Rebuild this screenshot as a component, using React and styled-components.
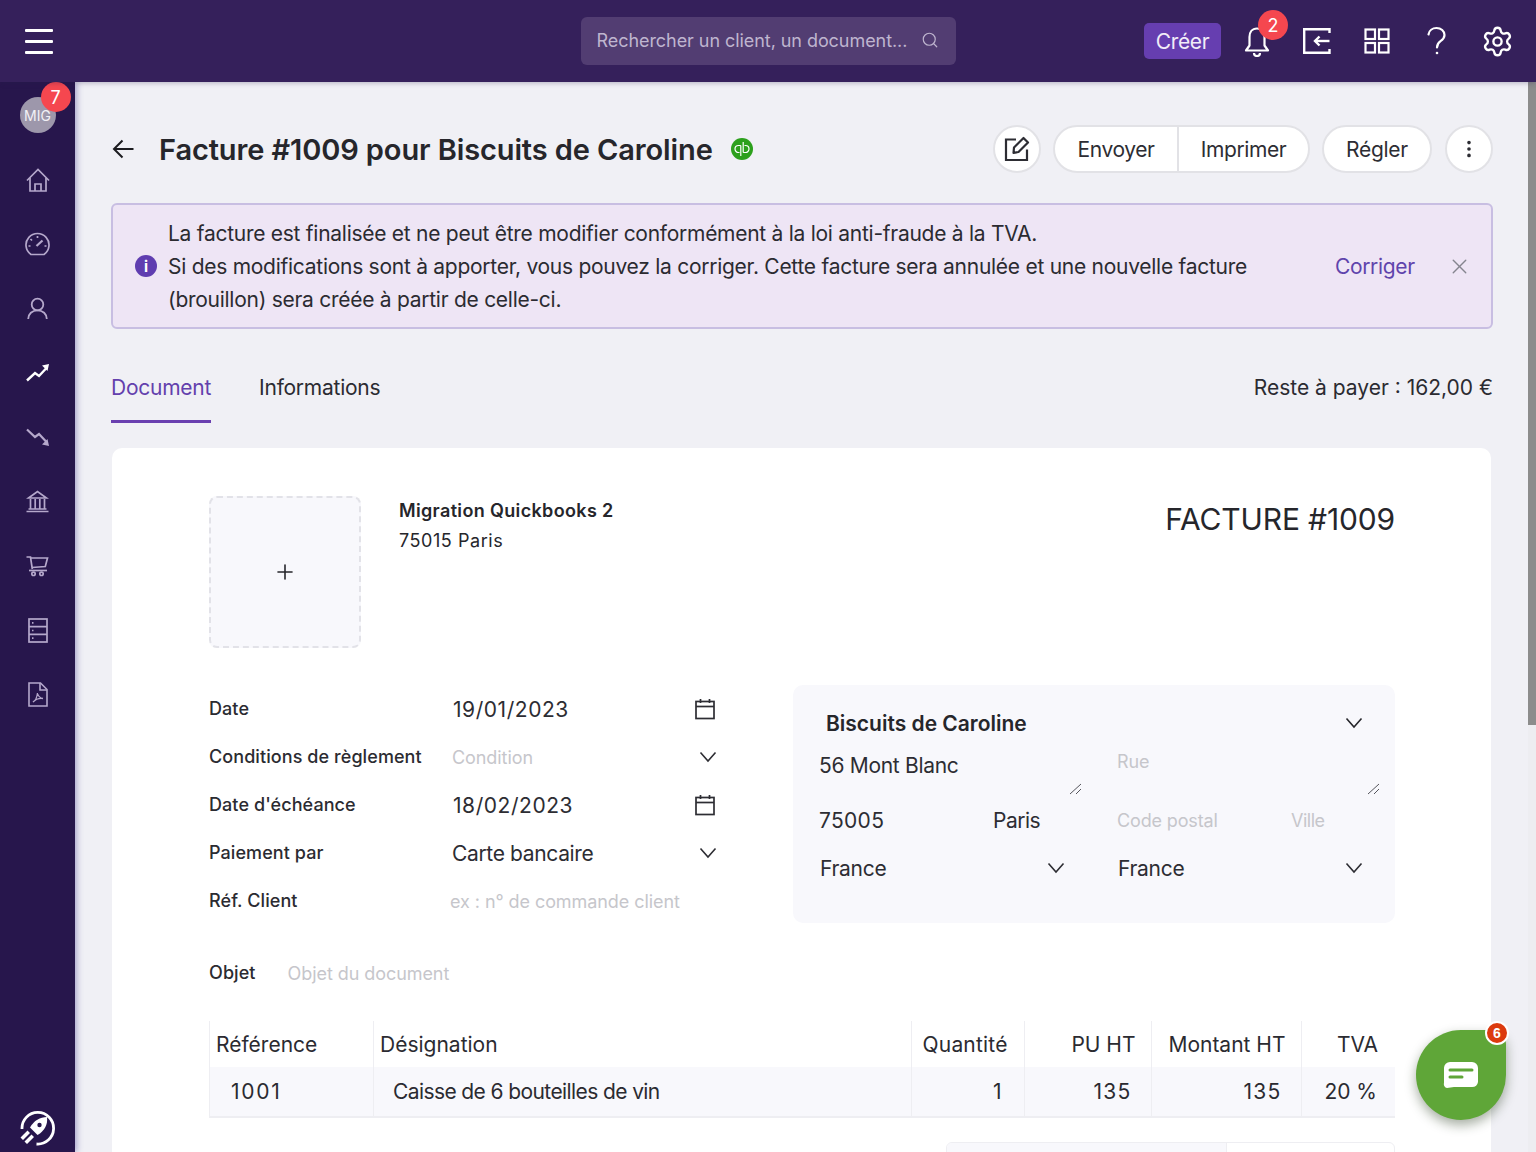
import React from "react";
import styled, {createGlobalStyle} from "styled-components";
import {EllipsisVertical, Plus, Search, Settings, X} from "lucide-react";

const GlobalStyle = createGlobalStyle`
  html, body {
    margin: 0;
    padding: 0;
    height: 1152px;
    overflow: hidden;
    background: #f0f0f5;
  }
  * { box-sizing: border-box; }
  body {
    font-family: Inter, "Liberation Sans", sans-serif;
    color: #26262b;
  }
`;

const Page = styled.div`
  width: 1536px;
  height: 1152px;
  display: flex;
  flex-direction: column;
  position: relative;
  overflow: hidden;
`;

/* top bar */
const TopBar = styled.header`
  height: 82px;
  flex: none;
  background: #35205b;
  display: grid;
  grid-template-columns: 1fr 375px 1fr;
  align-items: center;
  position: relative;
  z-index: 3;
  box-shadow: 0 1px 5px rgba(40, 30, 80, 0.3);
`;

const Burger = styled.button`
  width: 28px;
  height: 25px;
  margin-left: 25px;
  padding: 0;
  border: 0;
  background: none;
  display: flex;
  flex-direction: column;
  justify-content: space-between;
  span {
    display: block;
    height: 3px;
    border-radius: 1px;
    background: #fff;
  }
`;

const SearchBox = styled.div`
  height: 48px;
  border-radius: 6px;
  background: #523d72;
  display: flex;
  align-items: center;
  justify-content: space-between;
  padding: 0 17px 2px 16px;
  color: #bfb5cf;
  font-size: 18px;
  letter-spacing: -0.06px;
`;

const TopActions = styled.div`
  display: flex;
  align-items: center;
  justify-content: flex-end;
  padding-right: 9px;
`;

const CreateButton = styled.button`
  width: 77px;
  height: 36px;
  border: 0;
  border-radius: 5px;
  background: #663eb0;
  color: #f1ecf8;
  font: 400 21px Inter, sans-serif;
  letter-spacing: -0.4px;
  margin-right: 6px;
`;

const TopIcon = styled.div`
  width: 60px;
  height: 40px;
  display: flex;
  align-items: center;
  justify-content: center;
  color: #fff;
  position: relative;
`;

const Badge = styled.span`
  position: absolute;
  width: 30px;
  height: 30px;
  border-radius: 50%;
  background: #f5474f;
  color: #fff;
  font-size: 18px;
  display: flex;
  align-items: center;
  justify-content: center;
  top: ${(p) => p.$top}px;
  left: ${(p) => p.$left}px;
`;

/* body layout */
const Body = styled.div`
  flex: 1;
  display: flex;
  min-height: 0;
`;

const SideBar = styled.nav`
  width: 75px;
  flex: none;
  background: #27164c;
  display: flex;
  flex-direction: column;
  align-items: center;
  padding-top: 15px;
  position: relative;
  z-index: 2;
  box-shadow: 2px 0 6px rgba(85, 70, 160, 0.45);
`;

const Avatar = styled.div`
  width: 36px;
  height: 36px;
  border-radius: 50%;
  background: #9d97ab;
  color: #f2f0f5;
  font-size: 14px;
  display: flex;
  align-items: center;
  justify-content: center;
  position: relative;
  margin-bottom: 14.5px;
`;

const NavIcon = styled.div`
  height: 64.4px;
  flex: none;
  width: 100%;
  display: flex;
  align-items: center;
  justify-content: center;
  color: ${(p) => (p.$active ? "#ffffff" : "#b5a8cb")};
`;

const RocketSlot = styled.div`
  margin-top: auto;
  height: 42px;
  display: flex;
  align-items: flex-start;
  padding-right: 1px;
`;

const Main = styled.main`
  flex: 1;
  min-width: 0;
  padding: 43px 35px 0 36px;
  background: #f0f0f5;
  overflow: hidden;
`;

const ScrollTrack = styled.div`
  width: 8px;
  flex: none;
  background: #ededf1;
`;

const ScrollThumb = styled.div`
  height: 643px;
  background: #8c8c8c;
`;

/* title row */
const TitleRow = styled.div`
  height: 48px;
  display: flex;
  align-items: center;
`;

const BackLink = styled.div`
  width: 48px;
  padding-left: 1px;
  display: flex;
  color: #1c1c20;
`;

const Title = styled.h1`
  margin: 0;
  font-size: 29px;
  font-weight: 600;
  letter-spacing: -0.11px;
  color: #26262b;
  white-space: nowrap;
`;

const StatusDot = styled.svg`
  margin-left: 18px;
  flex: none;
`;

const TitleActions = styled.div`
  margin-left: auto;
  display: flex;
  gap: 12px;
  align-items: center;
`;

const RoundButton = styled.button`
  height: 48px;
  width: ${(p) => (p.$w ? p.$w + "px" : "48px")};
  margin-left: ${(p) => p.$ml || 0}px;
  padding: 0;
  border-radius: 24px;
  border: 2px solid #e2e2e6;
  background: #fff;
  color: #2d2d33;
  font: 400 21px Inter, sans-serif;
  letter-spacing: -0.25px;
  display: flex;
  align-items: center;
  justify-content: center;
`;

const ButtonGroup = styled.div`
  height: 48px;
  display: flex;
  border-radius: 24px;
  border: 2px solid #e2e2e6;
  background: #fff;
  overflow: hidden;
`;

const GroupItem = styled.div`
  width: ${(p) => p.$w}px;
  display: flex;
  align-items: center;
  justify-content: center;
  font-size: 21px;
  letter-spacing: -0.4px;
  color: #2d2d33;
  & + & {
    border-left: 2px solid #e2e2e6;
  }
`;

/* alert */
const Alert = styled.div`
  margin-top: 30px;
  height: 126px;
  border: 2px solid #c8bee2;
  border-radius: 6px;
  background: #eee5f5;
  display: flex;
  align-items: center;
  padding: 0 19px 0 22px;
`;

const InfoDot = styled.div`
  width: 22px;
  height: 22px;
  flex: none;
  border-radius: 50%;
  background: #5f3db0;
  color: #fff;
  font-size: 15px;
  font-weight: 700;
  display: flex;
  align-items: center;
  justify-content: center;
  margin-right: 11px;
`;

const AlertText = styled.div`
  font-size: 21px;
  line-height: 33px;
  letter-spacing: -0.27px;
  padding-top: 1px;
  width: 1167px;
  flex: none;
  color: #2b2b31;
`;

const AlertLink = styled.span`
  font-size: 21px;
  letter-spacing: -0.35px;
  color: #5f44ac;
`;

const AlertClose = styled.span`
  margin-left: auto;
  display: flex;
  color: #85858f;
`;

/* tabs */
const TabsRow = styled.div`
  margin-top: 43px;
  display: flex;
  align-items: flex-start;
  gap: 48px;
`;

const Tab = styled.div`
  font-size: 21px;
  letter-spacing: -0.25px;
  line-height: 32px;
  padding-bottom: 16px;
  height: 51px;
  color: ${(p) => (p.$active ? "#6340ad" : "#2b2b31")};
  border-bottom: 3px solid ${(p) => (p.$active ? "#6a40b0" : "transparent")};
`;

const Balance = styled.div`
  margin-left: auto;
  font-size: 21px;
  line-height: 32px;
  color: #2b2b31;
`;

/* document card */
const Card = styled.section`
  margin: 25px 2px 0 1px;
  padding: 48px 96px 0 97px;
  background: #fff;
  border-radius: 10px;
`;

const CardHead = styled.div`
  display: flex;
  align-items: flex-start;
`;

const LogoDrop = styled.div`
  width: 152px;
  height: 152px;
  flex: none;
  border: 2px dashed #e2e2e8;
  border-radius: 8px;
  background: #f8f8fc;
  display: flex;
  align-items: center;
  justify-content: center;
  color: #26262b;
`;

const Company = styled.div`
  margin-left: 38px;
  font-size: 18px;
  line-height: 29.5px;
  letter-spacing: 0.55px;
  strong {
    display: block;
    font-weight: 600;
    letter-spacing: 0.35px;
  }
`;

const DocNumber = styled.div`
  margin-left: auto;
  font-size: 30px;
  letter-spacing: -0.15px;
  line-height: 46px;
  color: #26262b;
`;

const FormGrid = styled.div`
  margin-top: 37px;
  display: grid;
  grid-template-columns: 508px 602px;
  justify-content: space-between;
  align-items: start;
`;

const FieldRow = styled.div`
  height: 48px;
  display: grid;
  grid-template-columns: 243px 1fr 24px;
  align-items: center;
`;

const FieldLabel = styled.div`
  font-size: 18px;
  font-weight: 500;
  letter-spacing: 0.08px;
  padding-bottom: 2px;
  color: #2b2b31;
`;

const FieldValue = styled.div`
  font-size: 21px;
  letter-spacing: ${(p) => (p.$digits ? "0.55px" : "-0.35px")};
  margin-left: ${(p) => (p.$digits ? "1px" : "0")};
  color: #2d2d33;
`;

const Placeholder = styled.div`
  font-size: 18px;
  letter-spacing: -0.07px;
  color: #c6c6cb;
  margin-left: ${(p) => p.$ml || 0}px;
`;

const IconSlot = styled.div`
  display: flex;
  justify-content: center;
  color: #2d2d33;
  margin-left: ${(p) => p.$ml || 0}px;
`;

/* client block */
const ClientPanel = styled.div`
  height: 238px;
  padding: 20px 12px 0 26px;
  border-radius: 10px;
  background: #f8f8fc;
`;

const ClientHead = styled.div`
  height: 36px;
  display: flex;
  align-items: center;
  justify-content: space-between;
  padding: 0 20px 0 7px;
  font-size: 21px;
  font-weight: 600;
  color: #26262b;
`;

const AddressColumns = styled.div`
  display: grid;
  grid-template-columns: 266px 266px;
  column-gap: 32px;
`;

const AddressBlock = styled.div`
  height: 56px;
  display: flex;
  justify-content: space-between;
`;

const AddressText = styled.div`
  padding-top: ${(p) => p.$pt}px;
  font-size: ${(p) => p.$size}px;
  color: ${(p) => p.$color};
  letter-spacing: ${(p) => p.$spacing || 0};
  line-height: 30px;
`;

const Grip = styled.svg`
  align-self: flex-end;
  margin: 0 3px 2px 0;
`;

const CityRow = styled.div`
  height: 47px;
  display: grid;
  grid-template-columns: 174px 1fr;
  align-items: center;
  font-size: ${(p) => p.$size}px;
  letter-spacing: ${(p) => p.$spacing || 0};
  color: ${(p) => p.$color};
  span + span {
    letter-spacing: -0.5px;
  }
`;

const CountryRow = styled.div`
  height: 48px;
  display: flex;
  align-items: center;
  justify-content: space-between;
  padding: 0 20px 0 1px;
  font-size: 21px;
  letter-spacing: -0.3px;
  color: #2d2d33;
`;

const ObjectRow = styled.div`
  margin-top: 24px;
  height: 48px;
  display: flex;
  align-items: center;
  gap: 32px;
`;

/* table of lines */
const LinesTable = styled.table`
  margin-top: 24px;
  width: 100%;
  border-collapse: collapse;
  table-layout: fixed;
  font-size: 21px;
  color: #2b2b31;
  border-bottom: 2px solid #eeeef2;
`;

const HeadCell = styled.th`
  height: 46px;
  width: ${(p) => (p.$w ? p.$w + "px" : "auto")};
  padding: 0 ${(p) => p.$pr || 0}px 0 ${(p) => p.$pl || 0}px;
  font-weight: 400;
  letter-spacing: ${(p) => p.$spacing || 0};
  text-align: ${(p) => p.$align || "left"};
  border-left: 1.5px solid #eeeef2;
`;

const BodyCell = styled.td`
  height: 50px;
  padding: 0 ${(p) => p.$pr || 0}px 0 ${(p) => p.$pl || 0}px;
  background: #f8f8fc;
  text-align: ${(p) => p.$align || "left"};
  border-left: 1.5px solid #eeeef2;
  letter-spacing: ${(p) => p.$spacing || 0};
`;

const Totals = styled.div`
  margin: 24px 0 0 auto;
  width: 449px;
  height: 60px;
  display: grid;
  grid-template-columns: 280px 1fr;
  border: 1.5px solid #eeeef2;
  border-radius: 6px 6px 0 0;
  overflow: hidden;
  div:first-child {
    background: #f8f8fc;
    border-right: 1.5px solid #eeeef2;
  }
`;

/* floating chat */
const ChatBubble = styled.button`
  position: absolute;
  left: 1416px;
  top: 1030px;
  width: 90px;
  height: 90px;
  padding: 0;
  border: 0;
  border-radius: 50% 16px 50% 50% / 50% 14px 50% 50%;
  background: #5fa638;
  box-shadow: 0 5px 12px rgba(30, 50, 20, 0.4);
  display: flex;
  align-items: center;
  justify-content: center;
  z-index: 4;
`;

const ChatBadge = styled.span`
  position: absolute;
  top: -9px;
  right: -3px;
  width: 24px;
  height: 24px;
  border-radius: 50%;
  border: 2.5px solid #fff;
  background: #dc3a0e;
  color: #fff;
  font-size: 14px;
  font-weight: 600;
  display: flex;
  align-items: center;
  justify-content: center;
`;

const BackArrow = () => (
  <svg width="22" height="20" viewBox="0 0 22 20" fill="none" stroke="currentColor" strokeWidth="2">
    <path d="M21.500 10H2M10.500 1.500 2 10l8.500 8.500" />
  </svg>
);

const BellIcon = () => (
  <svg width="26" height="31" viewBox="0 0 26 31" fill="none" stroke="currentColor" strokeWidth="2.200" strokeLinejoin="round">
    <path d="M13 2.500c-5 0-7.500 3.800-7.500 8.500v8.500L2 24.500h22l-3.500-5V11c0-4.700-2.500-8.500-7.500-8.500z" />
    <path d="M10 27a3 3 0 0 0 6 0" />
  </svg>
);

const TransferIcon = () => (
  <svg width="30" height="28" viewBox="0 0 30 28" fill="none" stroke="currentColor" strokeWidth="2.400">
    <path d="M27.500 6V2.200H2.200v23.600h25.300V22" />
    <path d="M27.500 14H13" />
    <path d="M17.500 9.500 13 14l4.500 4.500" />
  </svg>
);

const TilesIcon = () => (
  <svg width="26" height="26" viewBox="0 0 26 26" fill="none" stroke="currentColor" strokeWidth="2.200">
    <rect x="1.500" y="1.500" width="9.500" height="9.500" />
    <rect x="15" y="1.500" width="9.500" height="9.500" />
    <rect x="1.500" y="15" width="9.500" height="9.500" />
    <rect x="15" y="15" width="9.500" height="9.500" />
  </svg>
);

const QuestionIcon = () => (
  <svg width="22" height="30" viewBox="0 0 22 30" fill="none" stroke="currentColor" strokeWidth="2.200">
    <path d="M2.500 8.500C3 4.500 6.500 2 10.500 2c4.500 0 8 3 8 7 0 3-1.700 4.600-4 6.200-2.200 1.600-3.500 3-3.500 6.300" strokeLinecap="round" />
    <circle cx="11" cy="27" r="1.300" fill="currentColor" stroke="none" />
  </svg>
);

const EditIcon = () => (
  <svg width="26" height="26" viewBox="0 0 26 26" fill="none" stroke="#2d2d33" strokeWidth="2.200">
    <path d="M12 3.500H2v20.500h21V13.500" />
    <path d="M10 11.500 19.500 2l4.500 4.500-9.500 9.500-5 .8z" strokeLinejoin="round" />
  </svg>
);

const CalendarIcon = () => (
  <svg width="20" height="22" viewBox="0 0 20 22" fill="none" stroke="currentColor" strokeWidth="1.700">
    <rect x="1" y="3.500" width="18" height="17" />
    <path d="M1 8.500h18" />
    <path d="M5.500 1v4M14.500 1v4" />
  </svg>
);

const ChevronIcon = () => (
  <svg width="18" height="12" viewBox="0 0 18 12" fill="none" stroke="currentColor" strokeWidth="1.600">
    <path d="M1.500 1.500 9 10l7.500-8.500" />
  </svg>
);

const HomeIcon = () => (
  <svg width="24" height="24" viewBox="0 0 24 24" fill="none" stroke="currentColor" strokeWidth="1.700">
    <path d="M1 12.500 12 1.500l11 11" />
    <path d="M4 10v13h16V10" />
    <path d="M9 23v-7h6v7" />
  </svg>
);

const GaugeIcon = () => (
  <svg width="25" height="24" viewBox="0 0 25 24" fill="none" stroke="currentColor" strokeWidth="1.700">
    <path d="M6 22.500h13a11.500 11.500 0 1 0-13 0z" />
    <path d="M11.500 14 17.500 8.500" strokeWidth="2.200" />
    <path d="M12.500 4v2M5.500 7l1.500 1.500M3.500 14h2M19.500 14h2" />
  </svg>
);

const UserIcon = () => (
  <svg width="21" height="23" viewBox="0 0 21 23" fill="none" stroke="currentColor" strokeWidth="1.800">
    <circle cx="10.500" cy="7.500" r="5.800" />
    <path d="M1.200 22c0-5 4-8.700 9.300-8.700s9.300 3.700 9.300 8.700" />
  </svg>
);

const TrendUpIcon = () => (
  <svg width="24" height="19" viewBox="0 0 24 19" fill="none" stroke="currentColor" strokeWidth="2.400">
    <path d="M1 17.500 9 10l4 3 7.500-8" />
    <path d="M16 2.500 23 1l-1.500 7z" fill="currentColor" stroke="none" />
  </svg>
);

const TrendDownIcon = () => (
  <svg width="24" height="19" viewBox="0 0 24 19" fill="none" stroke="currentColor" strokeWidth="2.200">
    <path d="M1 1.500 9 9l4-3 7.500 8" />
    <path d="M16 16.500 23 18l-1.500-7z" fill="currentColor" stroke="none" />
  </svg>
);

const BankIcon = () => (
  <svg width="23" height="23" viewBox="0 0 23 23" fill="none" stroke="currentColor" strokeWidth="1.700">
    <path d="M2.500 8 11.500 1.500 20.500 8z" />
    <path d="M4.500 9v10M9.200 9v10M13.800 9v10M18.500 9v10" />
    <path d="M0.500 21.500h22M2.500 19h18" />
  </svg>
);

const CartIcon = () => (
  <svg width="23" height="21" viewBox="0 0 23 21" fill="none" stroke="currentColor" strokeWidth="1.700">
    <path d="M0.500 1h4l1.800 12" />
    <path d="M4.700 2H21.500l-2.200 8.500L6 11.500" />
    <path d="M3 14.500h18" />
    <circle cx="7.500" cy="17.800" r="1.700" />
    <circle cx="15.500" cy="17.800" r="1.700" />
  </svg>
);

const ServerIcon = () => (
  <svg width="20" height="25" viewBox="0 0 20 25" fill="none" stroke="currentColor" strokeWidth="1.700">
    <rect x="1" y="1" width="18" height="23" />
    <path d="M1 8.700h18M1 16.300h18" />
    <path d="M4 4.800h1.500M4 12.500h1.500M4 20.200h1.500" />
  </svg>
);

const PdfIcon = () => (
  <svg width="20" height="25" viewBox="0 0 20 25" fill="none" stroke="currentColor" strokeWidth="1.600">
    <path d="M1 1h11.500L19 7.500V24H1z" />
    <path d="M12 1v7h7" />
    <path d="M5 20c2-1 4-5 4.500-9 .5 3 2.500 5 5.500 5.500-3-.5-7 .5-10 3.500z" strokeWidth="1.300" />
  </svg>
);

const RocketIcon = () => (
  <svg width="36" height="36" viewBox="0 0 36 36" fill="none">
    <path d="M3 19A15.800 15.800 0 1 1 17.500 34" stroke="#fff" strokeWidth="2.800" />
    <path d="M28 7c-7 0-13 3.500-17 10.500l7.500 7.500c7-4 10.500-10.500 9.500-18z" fill="#fff" />
    <circle cx="20.500" cy="15" r="2.200" fill="#27164c" />
    <path d="M8.500 20.500l-7 7 2.500 2.500 7-7zM12.500 24.500l-7 7 2.500 2.500 7-7z" fill="#fff" />
  </svg>
);

const QuickbooksIcon = () => (
  <StatusDot width="22" height="22" viewBox="0 0 22 22">
    <circle cx="11" cy="11" r="11" fill="#2ca01c" />
    <path
      d="M9.800 7.500V18M9.800 7.500H7.500a3.500 3.500 0 0 0 0 7H8.500M12.200 14.500V4M12.200 14.500h2.300a3.500 3.500 0 0 0 0-7H13.500"
      stroke="#fff"
      strokeWidth="1.200"
      fill="none"
    />
  </StatusDot>
);

const GripIcon = () => (
  <Grip width="13" height="12" viewBox="0 0 13 12" stroke="#55555c" strokeWidth="1">
    <path d="M1 11 12 1M7 11l5-5" />
  </Grip>
);

const ChatIcon = () => (
  <svg width="36" height="28" viewBox="0 0 36 28">
    <path
      d="M7 1h22a6 6 0 0 1 6 6v14a6 6 0 0 1-6 5H11L4 27a4 4 0 0 1-3-5V7a6 6 0 0 1 6-6z"
      fill="#fff"
    />
    <path d="M7 9h22" stroke="#5fa638" strokeWidth="3" strokeLinecap="round" />
    <path d="M7 16h12" stroke="#5fa638" strokeWidth="3" strokeLinecap="round" />
  </svg>
);

const navItems = [
  {icon: <HomeIcon />},
  {icon: <GaugeIcon />},
  {icon: <UserIcon />},
  {icon: <TrendUpIcon />, active: true},
  {icon: <TrendDownIcon />},
  {icon: <BankIcon />},
  {icon: <CartIcon />},
  {icon: <ServerIcon />},
  {icon: <PdfIcon />},
];

const leftFields = [
  {label: "Date", value: "19/01/2023", digits: true, icon: "date"},
  {label: "Conditions de règlement", hint: "Condition", icon: "select"},
  {label: "Date d'échéance", value: "18/02/2023", digits: true, icon: "date"},
  {label: "Paiement par", value: "Carte bancaire", icon: "select"},
  {label: "Réf. Client", hint: "ex : n° de commande client", offset: -2},
];

export default function App() {
  return (
    <Page>
      <GlobalStyle />
      <TopBar>
        <Burger aria-label="menu">
          <span />
          <span />
          <span />
        </Burger>
        <SearchBox>
          Rechercher un client, un document...
          <Search size={18} strokeWidth={1.6} />
        </SearchBox>
        <TopActions>
          <CreateButton>Créer</CreateButton>
          <TopIcon>
            <BellIcon />
            <Badge $top={-11} $left={31}>2</Badge>
          </TopIcon>
          <TopIcon>
            <TransferIcon />
          </TopIcon>
          <TopIcon>
            <TilesIcon />
          </TopIcon>
          <TopIcon>
            <QuestionIcon />
          </TopIcon>
          <TopIcon>
            <Settings size={33} strokeWidth={1.7} />
          </TopIcon>
        </TopActions>
      </TopBar>

      <Body>
        <SideBar>
          <Avatar>
            MIG
            <Badge $top={-15} $left={21}>7</Badge>
          </Avatar>
          {navItems.map((item, i) => (
            <NavIcon key={i} $active={item.active}>
              {item.icon}
            </NavIcon>
          ))}
          <RocketSlot>
            <RocketIcon />
          </RocketSlot>
        </SideBar>

        <Main>
          <TitleRow>
            <BackLink>
              <BackArrow />
            </BackLink>
            <Title>Facture #1009 pour Biscuits de Caroline</Title>
            <QuickbooksIcon />
            <TitleActions>
              <RoundButton>
                <EditIcon />
              </RoundButton>
              <ButtonGroup>
                <GroupItem $w={122}>Envoyer</GroupItem>
                <GroupItem $w={131}>Imprimer</GroupItem>
              </ButtonGroup>
              <RoundButton $w={110}>Régler</RoundButton>
              <RoundButton $ml={1}>
                <EllipsisVertical size={22} strokeWidth={2} />
              </RoundButton>
            </TitleActions>
          </TitleRow>

          <Alert>
            <InfoDot>i</InfoDot>
            <AlertText>
              La facture est finalisée et ne peut être modifier conformément à la loi anti-fraude à la TVA.
              <br />
              Si des modifications sont à apporter, vous pouvez la corriger. Cette facture sera annulée et une nouvelle facture
              <br />
              (brouillon) sera créée à partir de celle-ci.
            </AlertText>
            <AlertLink>Corriger</AlertLink>
            <AlertClose>
              <X size={25} strokeWidth={1.3} />
            </AlertClose>
          </Alert>

          <TabsRow>
            <Tab $active>Document</Tab>
            <Tab>Informations</Tab>
            <Balance>Reste à payer : 162,00 €</Balance>
          </TabsRow>

          <Card>
            <CardHead>
              <LogoDrop>
                <Plus size={24} strokeWidth={1.6} />
              </LogoDrop>
              <Company>
                <strong>Migration Quickbooks 2</strong>
                75015 Paris
              </Company>
              <DocNumber>FACTURE #1009</DocNumber>
            </CardHead>

            <FormGrid>
              <div>
                {leftFields.map((field) => (
                  <FieldRow key={field.label}>
                    <FieldLabel>{field.label}</FieldLabel>
                    {field.value ? (
                      <FieldValue $digits={field.digits}>{field.value}</FieldValue>
                    ) : (
                      <Placeholder $ml={field.offset}>{field.hint}</Placeholder>
                    )}
                    {field.icon === "date" && (
                      <IconSlot>
                        <CalendarIcon />
                      </IconSlot>
                    )}
                    {field.icon === "select" && (
                      <IconSlot $ml={6}>
                        <ChevronIcon />
                      </IconSlot>
                    )}
                  </FieldRow>
                ))}
              </div>

              <ClientPanel>
                <ClientHead>
                  Biscuits de Caroline
                  <ChevronIcon />
                </ClientHead>
                <AddressColumns>
                  <div>
                    <AddressBlock>
                      <AddressText $pt={10} $size={21} $color="#2d2d33" $spacing="-0.3px">56 Mont Blanc</AddressText>
                      <GripIcon />
                    </AddressBlock>
                    <CityRow $size={21} $color="#2d2d33" $spacing="0.3px">
                      <span>75005</span>
                      <span>Paris</span>
                    </CityRow>
                    <CountryRow>
                      France
                      <ChevronIcon />
                    </CountryRow>
                  </div>
                  <div>
                    <AddressBlock>
                      <AddressText $pt={6} $size={18} $color="#c6c6cb" $spacing="-0.1px">Rue</AddressText>
                      <GripIcon />
                    </AddressBlock>
                    <CityRow $size={18} $color="#c6c6cb" $spacing="-0.15px">
                      <span>Code postal</span>
                      <span>Ville</span>
                    </CityRow>
                    <CountryRow>
                      France
                      <ChevronIcon />
                    </CountryRow>
                  </div>
                </AddressColumns>
              </ClientPanel>
            </FormGrid>

            <ObjectRow>
              <FieldLabel>Objet</FieldLabel>
              <Placeholder>Objet du document</Placeholder>
            </ObjectRow>

            <LinesTable>
              <thead>
                <tr>
                  <HeadCell $w={164} $pl={6}>Référence</HeadCell>
                  <HeadCell $pl={6}>Désignation</HeadCell>
                  <HeadCell $w={113} $pl={11} $spacing="0.2px">Quantité</HeadCell>
                  <HeadCell $w={127} $pr={15} $align="right">PU HT</HeadCell>
                  <HeadCell $w={150} $pr={15} $align="right">Montant HT</HeadCell>
                  <HeadCell $w={94} $pr={17} $align="right">TVA</HeadCell>
                </tr>
              </thead>
              <tbody>
                <tr>
                  <BodyCell $pl={21} $spacing="1.7px">1001</BodyCell>
                  <BodyCell $pl={19} $spacing="-0.6px">Caisse de 6 bouteilles de vin</BodyCell>
                  <BodyCell $pr={22} $align="right">1</BodyCell>
                  <BodyCell $pr={19} $align="right" $spacing="1.2px">135</BodyCell>
                  <BodyCell $pr={19} $align="right" $spacing="1.2px">135</BodyCell>
                  <BodyCell $pr={18} $align="right">20 %</BodyCell>
                </tr>
              </tbody>
            </LinesTable>

            <Totals>
              <div />
              <div />
            </Totals>
          </Card>
        </Main>

        <ScrollTrack>
          <ScrollThumb />
        </ScrollTrack>
      </Body>

      <ChatBubble aria-label="chat">
        <ChatIcon />
        <ChatBadge>6</ChatBadge>
      </ChatBubble>
    </Page>
  );
}
